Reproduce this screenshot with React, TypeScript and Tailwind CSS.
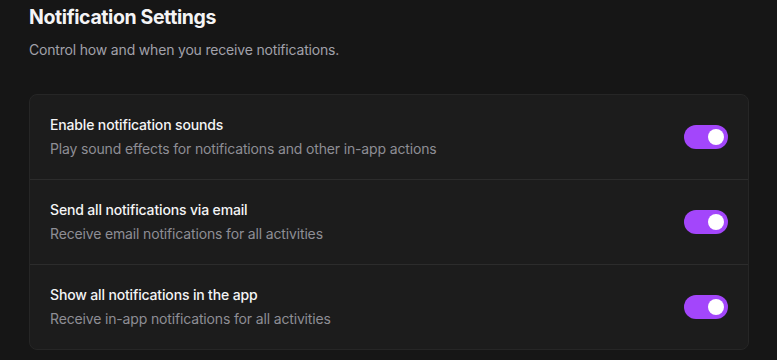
import React from "react";

const rows = [
  { title: "Enable notification sounds", desc: "Play sound effects for notifications and other in-app actions" },
  { title: "Send all notifications via email", desc: "Receive email notifications for all activities" },
  { title: "Show all notifications in the app", desc: "Receive in-app notifications for all activities" },
];

function Toggle() {
  return (
    <div className="flex h-6 w-11 items-center justify-end rounded-full bg-[#a346fb] px-1">
      <div className="h-4 w-4 rounded-full bg-white" />
    </div>
  );
}

export default function App() {
  return (
    <div className="min-h-[360px] w-full bg-[#161616] px-[29px] pt-[3px]" style={{ fontFamily: "Inter, 'Noto Sans', sans-serif" }}>
      <h1 className="text-[19.5px] font-bold leading-7 tracking-[-0.02em] text-[#f4f4f5]">Notification Settings</h1>
      <p className="mt-[9px] text-sm leading-5 tracking-[-0.013em] text-[#a1a1aa]">Control how and when you receive notifications.</p>
      <div className="mt-[34px] w-[720px] overflow-hidden rounded-lg border border-[#262626] bg-[#1c1c1c]">
        {rows.map((r, i) => (
          <div key={i} className={`flex items-center justify-between px-5 py-5 ${i > 0 ? "border-t border-[#2c2c2c]" : ""}`}>
            <div className="flex flex-col gap-1">
              <div className="text-sm font-medium leading-5 tracking-[-0.011em] text-[#f4f4f5]">{r.title}</div>
              <div className="text-sm leading-5 tracking-[-0.011em] text-[#8e8e95]">{r.desc}</div>
            </div>
            <Toggle />
          </div>
        ))}
      </div>
    </div>
  );
}
